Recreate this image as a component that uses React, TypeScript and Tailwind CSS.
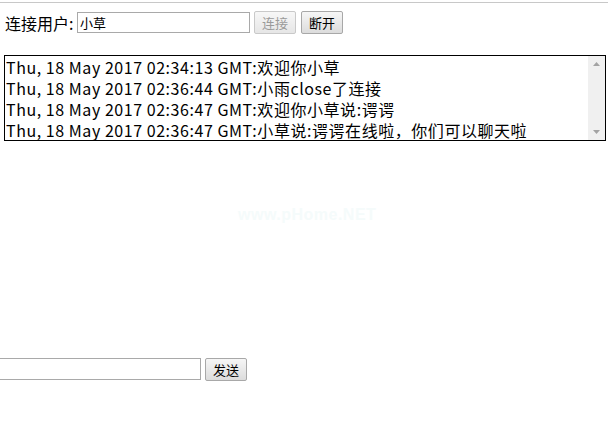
import React from "react";

const lines = [
  "Thu, 18 May 2017 02:34:13 GMT:欢迎你小草",
  "Thu, 18 May 2017 02:36:44 GMT:小雨close了连接",
  "Thu, 18 May 2017 02:36:47 GMT:欢迎你小草说:谔谔",
  "Thu, 18 May 2017 02:36:47 GMT:小草说:谔谔在线啦，你们可以聊天啦",
];

const font = { fontFamily: '"Noto Sans CJK SC", "Noto Sans", sans-serif' };

function Btn({ label, disabled }: { label: string; disabled?: boolean }) {
  return (
    <button
      className={
        disabled
          ? "h-[23px] px-[7px] text-[13px] leading-none rounded-[2px] border border-[#c9c9c9] bg-gradient-to-b from-[#f7f7f7] to-[#e6e6e6] text-[#9a9a9a]"
          : "h-[23px] px-[7px] text-[13px] leading-none rounded-[2px] border border-[#a8a8a8] bg-gradient-to-b from-[#f6f6f6] to-[#dcdcdc] text-black"
      }
    >
      {label}
    </button>
  );
}

export default function App() {
  return (
    <div className="w-[608px] h-[441px] bg-white overflow-hidden text-black" style={font}>
      <div className="mt-[2px] h-px bg-[#c8c8c8]" />

      {/* 连接栏 */}
      <div className="mt-[8px] flex items-center pl-[5px]">
        <span className="text-[16px] leading-none w-[72px]">连接用户:</span>
        <div className="w-[173px] h-[21px] border border-[#a9a9a9] flex items-center pl-[2px] text-[13px]">
          小草
        </div>
        <div className="ml-[4px] flex gap-[5px]">
          <Btn label="连接" disabled />
          <Btn label="断开" />
        </div>
      </div>

      {/* 消息框 */}
      <div className="mt-[21px] ml-[4px] w-[602px] h-[86px] border border-black flex">
        <div className="flex-1 pt-[1px] pl-[1px] text-[16px] leading-[21px] tracking-[0.55px] whitespace-nowrap overflow-hidden">
          {lines.map((l) => (
            <div key={l}>{l}</div>
          ))}
        </div>
        <div className="w-[17px] bg-[#f0f0f0] flex flex-col items-center justify-between py-[6px]">
          <svg width="7" height="4" viewBox="0 0 7 4">
            <path d="M0 4 L3.5 0 L7 4 Z" fill="#a3a3a3" />
          </svg>
          <svg width="7" height="4" viewBox="0 0 7 4">
            <path d="M0 0 L3.5 4 L7 0 Z" fill="#a3a3a3" />
          </svg>
        </div>
      </div>

      {/* 水印 */}
      <div
        className="mt-[66px] ml-[238px] text-[16px] leading-none font-bold text-[#f5fbfb] tracking-[0.5px]"
        style={{ fontFamily: '"Liberation Sans", Arial, sans-serif' }}
      >
        www.pHome.NET
      </div>

      {/* 发送栏 */}
      <div className="mt-[133px] flex items-center">
        <div className="-ml-[10px] w-[211px] h-[22px] border border-[#a9a9a9]" />
        <div className="ml-[4px]">
          <Btn label="发送" />
        </div>
      </div>
    </div>
  );
}
